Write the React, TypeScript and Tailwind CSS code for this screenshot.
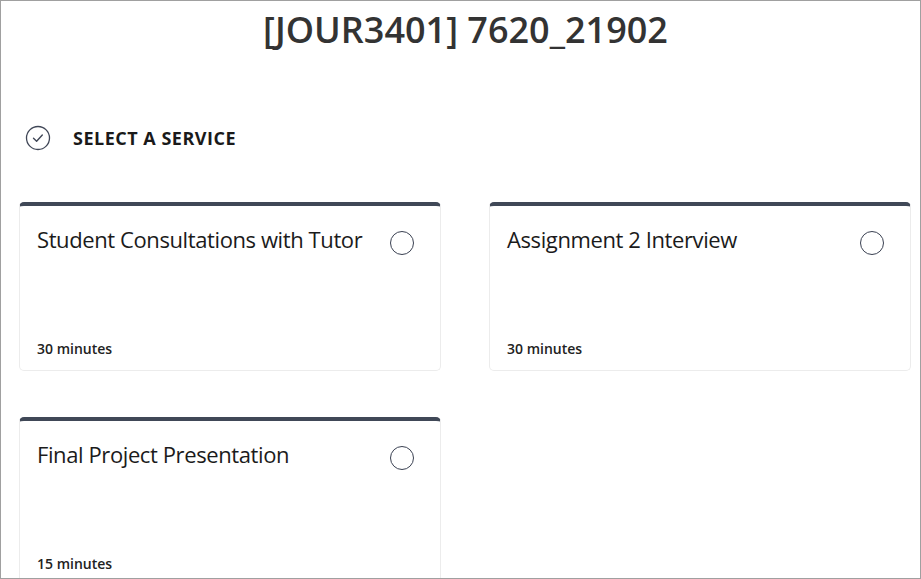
import React from "react";

const services = [
  { name: "Student Consultations with Tutor", duration: "30 minutes" },
  { name: "Assignment 2 Interview", duration: "30 minutes" },
  { name: "Final Project Presentation", duration: "15 minutes" },
];

function CheckCircle() {
  return (
    <svg width="26" height="26" viewBox="0 0 26 26" fill="none">
      <circle cx="13" cy="13" r="11.5" stroke="#3f4656" strokeWidth="1.3" />
      <path d="M8.5 13.3 L11.6 16.2 L17.3 10" stroke="#3f4656" strokeWidth="1.4" strokeLinecap="round" strokeLinejoin="round" />
    </svg>
  );
}

function Card({ name, duration }: { name: string; duration: string }) {
  return (
    <div className="h-[169px] rounded-[5px] border border-[#ececec] border-t-4 border-t-[#404857] bg-white flex flex-col pl-[17px] pr-[26px] pt-[18px] pb-[12px]">
      <div className="flex items-start justify-between">
        <div className="text-[22px] leading-[30px] tracking-[-0.4px] text-[#1b1b1b]">{name}</div>
        <div className="mt-[7px] w-[24px] h-[24px] rounded-full border-[1.5px] border-[#3a4152]" />
      </div>
      <div className="mt-auto text-[14px] leading-[18px] font-semibold text-[#222]">{duration}</div>
    </div>
  );
}

export default function App() {
  return (
    <div
      className="w-[921px] h-[579px] border border-[#a0a0a0] bg-white overflow-hidden"
      style={{ fontFamily: '"Open Sans", "Noto Sans", sans-serif' }}
    >
      <h1 className="text-center text-[36px] leading-[48px] font-semibold text-[#333] pt-[5px] pl-[10px]">
        [JOUR3401] 7620_21902
      </h1>
      <div className="flex items-center pl-[24px] mt-[71px] h-[26px]">
        <CheckCircle />
        <span className="ml-[22px] text-[18px] font-bold tracking-[0.5px] text-[#1a1a1a]">SELECT A SERVICE</span>
      </div>
      <div className="grid grid-cols-[422px_422px] gap-x-[48px] gap-y-[46px] pl-[18px] mt-[51px]">
        {services.map((s) => (
          <Card key={s.name} name={s.name} duration={s.duration} />
        ))}
      </div>
    </div>
  );
}
